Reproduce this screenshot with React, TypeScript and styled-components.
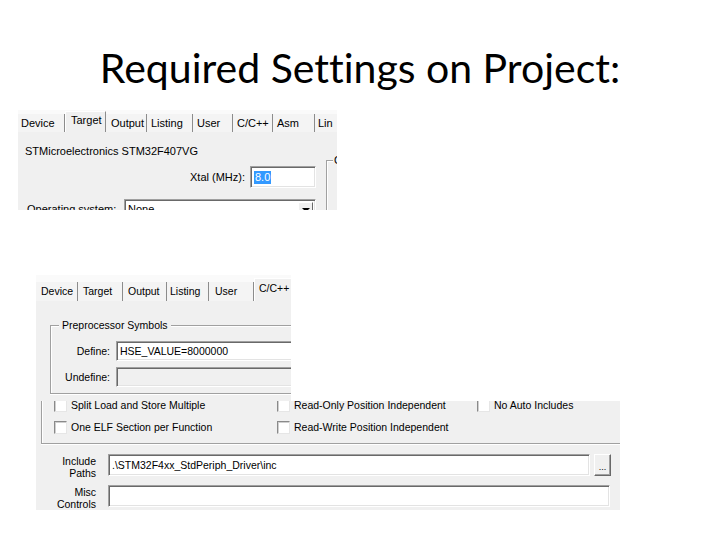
import styled, { createGlobalStyle } from "styled-components";

const GlobalStyle = createGlobalStyle`
  html, body {
    margin: 0;
    padding: 0;
    background: #fff;
  }
  body {
    font-family: "Liberation Sans", Arial, sans-serif;
  }
`

const Slide = styled.div`
  width: 720px;
  height: 540px;
  background: #fff;
  display: flex;
  flex-direction: column;
  overflow: hidden;
`

const Title = styled.h1`
  margin: 0;
  padding-top: 40px;
  height: 56px;
  line-height: 56px;
  text-align: center;
  font-family: Lato, "Open Sans", sans-serif;
  font-weight: 400;
  font-size: 41px;
  font-variant-ligatures: none;
  color: #000;
`

const Shot = styled.div<{ $w: number; $h: number; $size: number }>`
  flex: none;
  width: ${p => p.$w}px;
  height: ${p => p.$h}px;
  background: #f0f0f0;
  overflow: hidden;
  display: flex;
  flex-direction: column;
  font-family: "Liberation Sans", Arial, sans-serif;
  font-size: ${p => p.$size}px;
  color: #000;
`

const FirstShot = styled(Shot)`
  margin: 14px 0 0 18px;
`

const SecondShot = styled.div`
  margin: 65px 0 0 36px;
  display: flex;
  flex-direction: column;
`

const TabStrip = styled.div<{ $h: number }>`
  flex: none;
  height: ${p => p.$h}px;
  display: flex;
  align-items: flex-end;
  background: #fafafa;
`

const Tab = styled.div<{ $w?: number; $pad: number; $h: number; $active?: boolean; $last?: boolean }>`
  flex: ${p => (p.$w ? "none" : "1")};
  width: ${p => (p.$w ? `${p.$w}px` : "auto")};
  height: ${p => p.$h}px;
  box-sizing: border-box;
  padding-left: ${p => p.$pad}px;
  padding-bottom: ${p => (p.$active ? 4 : 1)}px;
  display: flex;
  align-items: center;
  white-space: nowrap;
  background: ${p => (p.$active ? "#f0f0f0" : "#f4f4f4")};
  border-right: ${p => (p.$last ? "none" : "1px solid #8c8c8c")};
  border-left: ${p => (p.$active ? "1px solid #fff" : "none")};
  border-top: ${p => (p.$active ? "1px solid #fff" : "none")};
`

/* first screenshot: Target tab */

const TargetBody = styled.div`
  flex: 1;
  display: flex;
`

const TargetMain = styled.div`
  flex: none;
  width: 308px;
  display: flex;
  flex-direction: column;
`

const DeviceName = styled.div`
  margin-top: 13px;
  padding-left: 7px;
  line-height: 13px;
  height: 13px;
`

const XtalRow = styled.div`
  margin-top: 8px;
  padding-right: 10px;
  display: flex;
  justify-content: flex-end;
  align-items: center;
  gap: 5px;
`

const OsRow = styled.div`
  margin-top: 11px;
  padding-left: 9px;
  display: flex;
  align-items: flex-start;
`

const OsLabel = styled.span`
  flex: none;
  width: 97px;
  margin-top: 4px;
  line-height: 13px;
`

const Field = styled.div<{ $w: number; $h: number; $bg?: string }>`
  flex: none;
  width: ${p => p.$w}px;
  height: ${p => p.$h}px;
  box-sizing: border-box;
  background: ${p => p.$bg ?? "#fff"};
  border: 1px solid;
  border-color: #a0a0a0 #fff #fff #a0a0a0;
  box-shadow: inset 1px 1px 0 #696969, inset -1px -1px 0 #e3e3e3;
  padding-left: 3px;
  display: flex;
  align-items: center;
  white-space: nowrap;
  overflow: hidden;
`

const Selected = styled.span`
  background: #3399ff;
  color: #fff;
  line-height: 13px;
  padding: 0 1px;
`

const Select = styled(Field)`
  align-items: flex-start;
  padding-top: 3px;
  justify-content: space-between;
  padding-right: 2px;
`

const DropButton = styled.span`
  width: 15px;
  height: 17px;
  box-sizing: border-box;
  background: #f0f0f0;
  border: 1px solid;
  border-color: #fff #696969 #696969 #fff;
  display: flex;
  justify-content: center;
  padding-top: 5px;
  margin-top: -1px;
  &::after {
    content: "";
    border-left: 4px solid transparent;
    border-right: 4px solid transparent;
    border-top: 4px solid #000;
    height: 0;
  }
`

const GroupSide = styled.div`
  flex: 1;
  display: flex;
  align-items: flex-start;
  padding-top: 22px;
`

const GroupEdge = styled.div`
  flex: none;
  width: 6px;
  align-self: stretch;
  margin-top: 6px;
  border-left: 1px solid #a0a0a0;
  border-top: 1px solid #a0a0a0;
  box-shadow: inset 1px 1px 0 #fff;
`

const GroupLetter = styled.span`
  line-height: 13px;
  padding-left: 1px;
`

/* second screenshot: C/C++ tab */

const UpperCrop = styled(Shot)``

const CppBody = styled.div`
  flex: 1;
  padding: 24px 0 0 14px;
`

const GroupBox = styled.div`
  width: 320px;
  box-sizing: border-box;
  border: 1px solid #a0a0a0;
  box-shadow: inset 1px 1px 0 #fff, 0 1px 0 #fff;
  padding-bottom: 6px;
  display: flex;
  flex-direction: column;
`

const Legend = styled.span`
  align-self: flex-start;
  margin: -7px 0 0 8px;
  padding: 0 3px;
  background: #f0f0f0;
  line-height: 13px;
`

const SymbolRow = styled.div<{ $top: number }>`
  margin-top: ${p => p.$top}px;
  display: flex;
  align-items: center;
  gap: 6px;
`

const RowLabel = styled.span<{ $w: number }>`
  flex: none;
  width: ${p => p.$w}px;
  text-align: right;
  line-height: 12px;
`

const LowerCrop = styled(Shot)``

const OptionsTail = styled.div`
  margin: -7px 0 0 5px;
  border-left: 1px solid #a0a0a0;
  border-bottom: 1px solid #a0a0a0;
  box-shadow: inset 1px 0 0 #fff, 0 1px 0 #fff;
  padding: 0 0 5px 12px;
  display: grid;
  grid-template-columns: 223px 200px auto;
  grid-auto-rows: 22px;
`

const Option = styled.label`
  display: flex;
  align-items: center;
  gap: 4px;
  white-space: nowrap;
`

const Check = styled.span`
  flex: none;
  width: 13px;
  height: 13px;
  box-sizing: border-box;
  background: #fff;
  border: 1px solid;
  border-color: #8a8a8a #e6e6e6 #e6e6e6 #8a8a8a;
  box-shadow: inset 1px 1px 0 #cfcfcf;
`

const PathRow = styled.div<{ $top: number }>`
  flex: none;
  height: 22px;
  margin-top: ${p => p.$top}px;
  display: flex;
  align-items: center;
`

const PathLabel = styled(RowLabel)`
  margin-right: 12px;
  margin-top: 3px;
`

const BrowseButton = styled.button`
  flex: none;
  margin-left: 4px;
  width: 17px;
  height: 22px;
  padding: 0 0 3px;
  box-sizing: border-box;
  background: #f0f0f0;
  border: 1px solid;
  border-color: #fff #696969 #696969 #fff;
  box-shadow: inset -1px -1px 0 #a0a0a0;
  font: inherit;
  font-size: 9px;
  display: flex;
  align-items: flex-end;
  justify-content: center;
`

const firstTabs = [
  { label: "Device", w: 47, pad: 3 },
  { label: "Target", w: 41, pad: 5, active: true },
  { label: "Output", w: 41, pad: 5 },
  { label: "Listing", w: 46, pad: 4 },
  { label: "User", w: 40, pad: 4 },
  { label: "C/C++", w: 40, pad: 4 },
  { label: "Asm", w: 42, pad: 4 },
  { label: "Lin", pad: 3, last: true },
]

const secondTabs = [
  { label: "Device", w: 42, pad: 5 },
  { label: "Target", w: 45, pad: 5 },
  { label: "Output", w: 44, pad: 5 },
  { label: "Listing", w: 42, pad: 3 },
  { label: "User", w: 45, pad: 6 },
  { label: "C/C++", pad: 4, active: true, last: true },
]

const options = [
  "Split Load and Store Multiple",
  "Read-Only Position Independent",
  "No Auto Includes",
  "One ELF Section per Function",
  "Read-Write Position Independent",
]

export default function App() {
  return (
    <Slide>
      <GlobalStyle />
      <Title>Required Settings on Project:</Title>

      <FirstShot $w={319} $h={100} $size={11}>
        <TabStrip $h={22}>
          {firstTabs.map(t => (
            <Tab key={t.label} $w={t.w} $pad={t.pad} $h={t.active ? 21 : 18} $active={t.active} $last={t.last}>
              {t.label}
            </Tab>
          ))}
        </TabStrip>
        <TargetBody>
          <TargetMain>
            <DeviceName>STMicroelectronics STM32F407VG</DeviceName>
            <XtalRow>
              <span>Xtal (MHz):</span>
              <Field $w={66} $h={22}>
                <Selected>8.0</Selected>
              </Field>
            </XtalRow>
            <OsRow>
              <OsLabel>Operating system:</OsLabel>
              <Select $w={192} $h={21}>
                <span>None</span>
                <DropButton />
              </Select>
            </OsRow>
          </TargetMain>
          <GroupSide>
            <GroupEdge />
            <GroupLetter>C</GroupLetter>
          </GroupSide>
        </TargetBody>
      </FirstShot>

      <SecondShot>
        <UpperCrop $w={255} $h={126} $size={10.5}>
          <TabStrip $h={26}>
            {secondTabs.map(t => (
              <Tab key={t.label} $w={t.w} $pad={t.pad} $h={t.active ? 23 : 19} $active={t.active} $last={t.last}>
                {t.label}
              </Tab>
            ))}
          </TabStrip>
          <CppBody>
            <GroupBox>
              <Legend>Preprocessor Symbols</Legend>
              <SymbolRow $top={9}>
                <RowLabel $w={59}>Define:</RowLabel>
                <Field $w={220} $h={20}>HSE_VALUE=8000000</Field>
              </SymbolRow>
              <SymbolRow $top={6}>
                <RowLabel $w={59}>Undefine:</RowLabel>
                <Field $w={220} $h={20} $bg="#f0f0f0" />
              </SymbolRow>
            </GroupBox>
          </CppBody>
        </UpperCrop>

        <LowerCrop $w={584} $h={109} $size={10.5}>
          <OptionsTail>
            {options.map(o => (
              <Option key={o}>
                <Check />
                {o}
              </Option>
            ))}
          </OptionsTail>
          <PathRow $top={10}>
            <PathLabel $w={60}>
              Include
              <br />
              Paths
            </PathLabel>
            <Field $w={482} $h={22}>.\STM32F4xx_StdPeriph_Driver\inc</Field>
            <BrowseButton>...</BrowseButton>
          </PathRow>
          <PathRow $top={9}>
            <PathLabel $w={60}>
              Misc
              <br />
              Controls
            </PathLabel>
            <Field $w={502} $h={22} />
          </PathRow>
        </LowerCrop>
      </SecondShot>
    </Slide>
  );
}
